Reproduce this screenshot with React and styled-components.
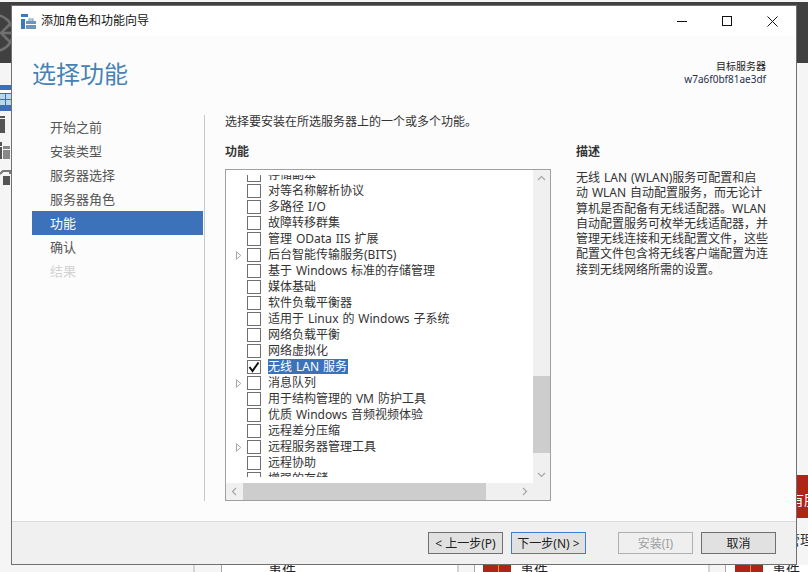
import React from "react";
import styled, { createGlobalStyle } from "styled-components";

const Global = createGlobalStyle`
  html, body { margin: 0; padding: 0; background: #f5f5f5; }
  * { box-sizing: border-box; }
  body { font-family: "Noto Sans", "Noto Sans CJK SC", sans-serif; }
`;

const Desktop = styled.div`
  position: relative; width: 808px; height: 572px; overflow: hidden;
  display: flex; flex-direction: column; background: #f5f5f5;
  padding-top: 2px;
`;
const TopBar = styled.div`height: 61px; background: #404040; display: flex; align-items: center; flex: none;`;
const Middle = styled.div`flex: 1; display: flex; justify-content: space-between; min-height: 0;`;
const Rail = styled.div`width: 11px; display: flex; flex-direction: column; padding-top: 22px; gap: 5px;`;
const RailActive = styled.div`height: 26px; background: #3b70b8; padding-top: 5px;`;
const RailIcon = styled.div`height: 17px; margin-bottom: 4px; display: flex; align-items: center;`;
const RightEdge = styled.div`
  width: 11px; background: #f5f5f5; overflow: hidden; display: flex; flex-direction: column; padding-top: 412px;
`;
const RedPanel = styled.div`
  height: 43px; width: 30px; background: #b02418; color: #fff; font-size: 14px; flex: none;
  padding: 15px 0 0 0; white-space: nowrap; line-height: 20px; text-indent: -7px;
`;
const EdgeText = styled.div`font-size: 14px; color: #333; margin-top: 12px; white-space: nowrap; line-height: 20px; text-indent: -11px;`;
const BottomStrip = styled.div`height: 7px; display: flex; flex: none; overflow: hidden;`;
const LeftFill = styled.div`width: 193px; flex: none;`;
const Gutter = styled.div`
  width: ${p => p.$w}px; flex: none; background: #f5f5f5;
  border-left: 2px solid #d4d4d4; border-right: 1px solid #a8a8a8;
`;
const Cell = styled.div`
  width: ${p => p.$w}px; flex: none; background: #fff; display: flex; gap: 9px;
  padding-left: ${p => p.$pad}px;
`;
const Red = styled.div`
  width: 28px; height: 7px; flex: none; background: #b02418; position: relative;
  &::after { content: ""; position: absolute; left: 15px; top: 0; width: 1px; height: 7px; background: #e8903a; }
`;
const CellText = styled.div`font-size: 14px; line-height: 20px; color: #222; margin-top: -5px; white-space: nowrap;`;

const Win = styled.div`
  position: absolute; left: 11px; top: 5px; width: 786px; height: 560px;
  border: 1px solid #707070; background: #fcfcfc; display: flex; flex-direction: column;
`;
const TitleBar = styled.div`
  height: 30px; flex: none; background: #fff; display: flex; align-items: center;
  padding-left: 9px; gap: 5px;
`;
const TitleText = styled.div`font-size: 12px; color: #111; line-height: 16px;`;
const WinButtons = styled.div`
  margin-left: auto; display: flex; align-items: center; gap: 35px; padding-right: 18px;
  svg { display: block; }
`;
const Header = styled.div`
  height: 79px; flex: none; display: flex; justify-content: space-between;
  padding: 21px 30px 0 20px;
`;
const Heading = styled.h1`margin: 0; font-weight: 400; font-size: 24px; line-height: 34px; color: #4682b4;`;
const Target = styled.div`text-align: right; color: #222; padding-top: 3px;`;
const TargetLabel = styled.div`font-size: 10px; line-height: 13px;`;
const TargetName = styled.div`font-size: 10px; line-height: 13px; color: #26304a;`;
const Body = styled.div`flex: 1; display: flex; min-height: 0; padding: 0 0 20px 20px;`;
const Nav = styled.nav`width: 171px; flex: none; display: flex; flex-direction: column;`;
const NavItem = styled.div`
  height: 24px; line-height: 24px; padding-left: 18px; font-size: 13px;
  color: ${p => (p.$active ? "#fff" : p.$disabled ? "#d2d2d2" : "#555")};
  background: ${p => (p.$active ? "#3b72ba" : "transparent")};
`;
const Divider = styled.div`width: 1px; margin-left: 1px; background: #c8c8c8; flex: none;`;
const Main = styled.div`flex: 1; margin-left: 20px; display: flex; flex-direction: column; min-width: 0;`;
const Instruction = styled.div`font-size: 12px; line-height: 14px; color: #333; margin-bottom: 16px;`;
const Columns = styled.div`flex: 1; display: flex; gap: 25px; min-height: 0;`;
const FeatureCol = styled.div`width: 326px; flex: none; display: flex; flex-direction: column;`;
const SectionTitle = styled.div`font-size: 12px; font-weight: 700; line-height: 14px; color: #333; margin-bottom: 10px;`;
const ListBox = styled.div`
  flex: 1; border: 1px solid #a0a0a0; background: #fff; display: grid;
  grid-template-columns: 1fr 17px; grid-template-rows: 1fr 17px; min-height: 0;
`;
const ListClip = styled.div`overflow: hidden; margin: 5px 0 6px; min-height: 0;`;
const List = styled.div`margin-top: -8px;`;
const Row = styled.div`
  height: 16px; display: flex; align-items: center; font-size: 12px; color: #333;
  white-space: nowrap; word-spacing: 0.8px;
`;
const Expander = styled.div`width: 21px; flex: none; padding-left: 10px; display: flex; align-items: center;`;
const Box = styled.div`
  width: 14px; height: 14px; flex: none; border: 1px solid #707070; background: #fff;
  display: flex; align-items: center; justify-content: center; margin-right: 7px;
`;
const Label = styled.span`
  line-height: 15px; height: 15px; padding-right: 1px; margin-bottom: 2px;
  color: ${p => (p.$selected ? "#fff" : "#333")};
  background: ${p => (p.$selected ? "#3b72ba" : "transparent")};
`;
const VScroll = styled.div`
  background: #f0f0f0; display: flex; flex-direction: column; grid-row: 1 / 2; grid-column: 2;
`;
const Arrow = styled.div`flex: none; height: 17px; width: 17px; display: flex; align-items: center; justify-content: center;`;
const VTrack = styled.div`flex: 1; display: flex; flex-direction: column; padding-top: 189px; padding-bottom: 13px;`;
const VThumb = styled.div`flex: 1; background: #cdcdcd;`;
const HScroll = styled.div`background: #f0f0f0; display: flex; grid-row: 2; grid-column: 1;`;
const HTrack = styled.div`flex: 1; display: flex; padding-right: 30px;`;
const HThumb = styled.div`flex: 1; background: #cdcdcd;`;
const Corner = styled.div`background: #f0f0f0;`;
const DescCol = styled.div`flex: 1; display: flex; flex-direction: column; min-width: 0;`;
const DescText = styled.div`font-size: 12px; line-height: 15.3px; color: #333; white-space: nowrap; margin-top: 1px; word-spacing: 0.8px;`;
const Footer = styled.div`
  height: 43px; flex: none; border-top: 1px solid #dcdcdc; background: #f0f0f0;
  display: flex; align-items: center; justify-content: flex-end; padding-right: 20px;
`;
const Btn = styled.div`
  width: 75px; height: 22px; display: flex; align-items: center; justify-content: center;
  font-size: 12px; margin-left: ${p => p.$gap}px;
  color: ${p => (p.$disabled ? "#a0a0a0" : "#222")};
  background: ${p => (p.$disabled ? "#efefef" : "#e1e1e1")};
  border: 1px solid ${p => (p.$primary ? "#3c7fd0" : p.$disabled ? "#b0b0b0" : "#707070")};
`;

const rows = [
  ["存储副本"], ["对等名称解析协议"], ["多路径 I/O"], ["故障转移群集"], ["管理 OData IIS 扩展"],
  ["后台智能传输服务(BITS)", "expand"], ["基于 Windows 标准的存储管理"], ["媒体基础"], ["软件负载平衡器"],
  ["适用于 Linux 的 Windows 子系统"], ["网络负载平衡"], ["网络虚拟化"], ["无线 LAN 服务", "checked"],
  ["消息队列", "expand"], ["用于结构管理的 VM 防护工具"], ["优质 Windows 音频视频体验"], ["远程差分压缩"],
  ["远程服务器管理工具", "expand"], ["远程协助"], ["增强的存储"],
];
const navItems = ["开始之前", "安装类型", "服务器选择", "服务器角色", "功能", "确认", "结果"];
const Chev = ({ d }) => (
  <svg width="9" height="9" viewBox="0 0 9 9" fill="none" stroke="#a6a6a6" strokeWidth="1.2"><path d={d} /></svg>
);

export default function App() {
  return (
    <Desktop>
      <Global />
      <TopBar>
        <svg width="12" height="44" viewBox="0 0 12 44" fill="none" stroke="#707070" strokeWidth="2.6">
          <circle cx="-5" cy="22" r="18" />
          <path d="M11 12 L1 22 L11 32" />
          <path d="M2 22 H12" />
        </svg>
      </TopBar>
      <Middle>
        <Rail>
          <RailActive>
            <svg width="11" height="16" viewBox="0 0 11 16" style={{ display: "block" }}>
              <rect x="0" y="0" width="11" height="3" fill="#fff" />
              <rect x="0" y="4" width="5" height="5" fill="#bcd6f2" /><rect x="6" y="4" width="5" height="5" fill="#bcd6f2" />
              <rect x="0" y="10" width="5" height="5" fill="#bcd6f2" /><rect x="6" y="10" width="5" height="5" fill="#bcd6f2" />
            </svg>
          </RailActive>
          <RailIcon>
            <svg width="11" height="17" viewBox="0 0 11 17"><rect x="0" y="0" width="5" height="2" fill="#555" /><rect x="0" y="3" width="5" height="14" fill="#555" /></svg>
          </RailIcon>
          <RailIcon>
            <svg width="11" height="17" viewBox="0 0 11 17"><rect x="0" y="0" width="2" height="4" fill="#555" /><rect x="0" y="5" width="2" height="12" fill="#555" /><rect x="3" y="4" width="7" height="3" fill="#888" /><rect x="3" y="8" width="7" height="9" fill="#888" /></svg>
          </RailIcon>
          <RailIcon>
            <svg width="11" height="17" viewBox="0 0 11 17"><path d="M0 6 L3 3 H10 V6" stroke="#777" strokeWidth="2" fill="none" /><rect x="3" y="8" width="7" height="9" fill="#555" /></svg>
          </RailIcon>
        </Rail>
        <RightEdge>
          <RedPanel>有服务</RedPanel>
          <EdgeText>管理</EdgeText>
        </RightEdge>
      </Middle>
      <BottomStrip>
        <LeftFill />
        <Gutter $w={29} />
        <Cell $w={235} $pad={46}><CellText>事件</CellText></Cell>
        <Gutter $w={18} />
        <Cell $w={233} $pad={8}><Red /><CellText>事件</CellText></Cell>
        <Gutter $w={18} />
        <Cell $w={82} $pad={9}><Red /><CellText>事件</CellText></Cell>
      </BottomStrip>

      <Win>
        <TitleBar>
          <svg width="15" height="15" viewBox="0 0 15 15">
            <rect x="0" y="0" width="7" height="3" fill="#3a78c0" />
            <rect x="0" y="5" width="4" height="10" fill="#3a78c0" />
            <path d="M5 7 H15 V15 H5 Z" fill="#6f96b8" />
            <rect x="8" y="5" width="4" height="2" fill="none" stroke="#6f96b8" />
            <rect x="5" y="10" width="10" height="1" fill="#fff" />
          </svg>
          <TitleText>添加角色和功能向导</TitleText>
          <WinButtons>
            <svg width="10" height="10" viewBox="0 0 10 10"><path d="M0 5.5 H10" stroke="#111" /></svg>
            <svg width="10" height="10" viewBox="0 0 10 10"><rect x=".5" y=".5" width="9" height="9" fill="none" stroke="#111" /></svg>
            <svg width="11" height="11" viewBox="0 0 11 11"><path d="M.5 .5 L10.5 10.5 M10.5 .5 L.5 10.5" stroke="#111" /></svg>
          </WinButtons>
        </TitleBar>
        <Header>
          <Heading>选择功能</Heading>
          <Target>
            <TargetLabel>目标服务器</TargetLabel>
            <TargetName>w7a6f0bf81ae3df</TargetName>
          </Target>
        </Header>
        <Body>
          <Nav>
            {navItems.map((n, i) => (
              <NavItem key={n} $active={i === 4} $disabled={i === 6}>{n}</NavItem>
            ))}
          </Nav>
          <Divider />
          <Main>
            <Instruction>选择要安装在所选服务器上的一个或多个功能。</Instruction>
            <Columns>
              <FeatureCol>
                <SectionTitle>功能</SectionTitle>
                <ListBox>
                  <ListClip>
                    <List>
                      {rows.map(([t, k]) => (
                        <Row key={t}>
                          <Expander>
                            {k === "expand" && (
                              <svg width="6" height="9" viewBox="0 0 6 9"><path d="M.5 .8 L4.8 4.5 L.5 8.2 Z" fill="none" stroke="#a6a6a6" /></svg>
                            )}
                          </Expander>
                          <Box>
                            {k === "checked" && (
                              <svg width="12" height="12" viewBox="0 0 12 12"><path d="M1.5 6 L4.5 10 L10.5 1.5" fill="none" stroke="#111" strokeWidth="2" /></svg>
                            )}
                          </Box>
                          <Label $selected={k === "checked"}>{t}</Label>
                        </Row>
                      ))}
                    </List>
                  </ListClip>
                  <VScroll>
                    <Arrow><Chev d="M1 6 L4.5 2.5 L8 6" /></Arrow>
                    <VTrack><VThumb /></VTrack>
                    <Arrow><Chev d="M1 3 L4.5 6.5 L8 3" /></Arrow>
                  </VScroll>
                  <HScroll>
                    <Arrow><Chev d="M6 1 L2.5 4.5 L6 8" /></Arrow>
                    <HTrack><HThumb /></HTrack>
                    <Arrow><Chev d="M3 1 L6.5 4.5 L3 8" /></Arrow>
                  </HScroll>
                  <Corner />
                </ListBox>
              </FeatureCol>
              <DescCol>
                <SectionTitle>描述</SectionTitle>
                <DescText>
                  无线 LAN (WLAN)服务可配置和启<br />
                  动 WLAN 自动配置服务，而无论计<br />
                  算机是否配备有无线适配器。WLAN<br />
                  自动配置服务可枚举无线适配器，并<br />
                  管理无线连接和无线配置文件，这些<br />
                  配置文件包含将无线客户端配置为连<br />
                  接到无线网络所需的设置。
                </DescText>
              </DescCol>
            </Columns>
          </Main>
        </Body>
        <Footer>
          <Btn>&lt; 上一步(P)</Btn>
          <Btn $gap={8} $primary>下一步(N) &gt;</Btn>
          <Btn $gap={32} $disabled>安装(I)</Btn>
          <Btn $gap={8}>取消</Btn>
        </Footer>
      </Win>
    </Desktop>
  );
}
